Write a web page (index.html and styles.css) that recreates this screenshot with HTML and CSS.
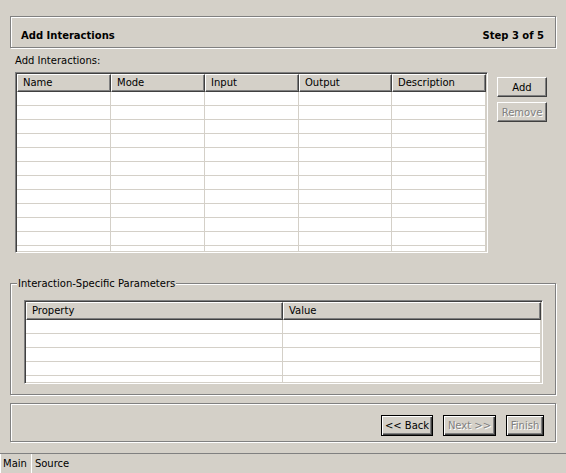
FILE: index.html
```html
<!DOCTYPE html>
<html>
<head>
<meta charset="utf-8">
<link rel="stylesheet" href="styles.css">
</head>
<body>
<div class="wizard">
  <div class="header etched">
    <span class="title">Add Interactions</span>
    <span class="step">Step 3 of 5</span>
  </div>
  <div class="label">Add Interactions:</div>
  <div class="main-row">
    <div class="table t1">
      <div class="thead">
        <div class="th">Name</div>
        <div class="th">Mode</div>
        <div class="th">Input</div>
        <div class="th">Output</div>
        <div class="th">Description</div>
      </div>
      <div class="tbody">
        <div class="tr"><div class="td"></div><div class="td"></div><div class="td"></div><div class="td"></div><div class="td"></div></div>
        <div class="tr"><div class="td"></div><div class="td"></div><div class="td"></div><div class="td"></div><div class="td"></div></div>
        <div class="tr"><div class="td"></div><div class="td"></div><div class="td"></div><div class="td"></div><div class="td"></div></div>
        <div class="tr"><div class="td"></div><div class="td"></div><div class="td"></div><div class="td"></div><div class="td"></div></div>
        <div class="tr"><div class="td"></div><div class="td"></div><div class="td"></div><div class="td"></div><div class="td"></div></div>
        <div class="tr"><div class="td"></div><div class="td"></div><div class="td"></div><div class="td"></div><div class="td"></div></div>
        <div class="tr"><div class="td"></div><div class="td"></div><div class="td"></div><div class="td"></div><div class="td"></div></div>
        <div class="tr"><div class="td"></div><div class="td"></div><div class="td"></div><div class="td"></div><div class="td"></div></div>
        <div class="tr"><div class="td"></div><div class="td"></div><div class="td"></div><div class="td"></div><div class="td"></div></div>
        <div class="tr"><div class="td"></div><div class="td"></div><div class="td"></div><div class="td"></div><div class="td"></div></div>
        <div class="tr"><div class="td"></div><div class="td"></div><div class="td"></div><div class="td"></div><div class="td"></div></div>
        <div class="tr last"><div class="td"></div><div class="td"></div><div class="td"></div><div class="td"></div><div class="td"></div></div>
      </div>
    </div>
    <div class="side-buttons">
      <button class="btn">Add</button>
      <button class="btn" disabled>Remove</button>
    </div>
  </div>
  <div class="group etched">
    <span class="group-title">Interaction-Specific Parameters</span>
    <div class="table t2">
      <div class="thead">
        <div class="th">Property</div>
        <div class="th">Value</div>
      </div>
      <div class="tbody">
        <div class="tr"><div class="td"></div><div class="td"></div></div>
        <div class="tr"><div class="td"></div><div class="td"></div></div>
        <div class="tr"><div class="td"></div><div class="td"></div></div>
        <div class="tr"><div class="td"></div><div class="td"></div></div>
        <div class="tr last"><div class="td"></div><div class="td"></div></div>
      </div>
    </div>
  </div>
  <div class="footer etched">
    <button class="btn nav back">&lt;&lt; Back</button>
    <button class="btn nav next" disabled>Next &gt;&gt;</button>
    <button class="btn nav finish" disabled>Finish</button>
  </div>
</div>
<div class="tabs">
  <div class="tab active">Main</div>
  <div class="tab">Source</div>
</div>
</body>
</html>
```

FILE: styles.css
```css
html, body {
  margin: 0;
  padding: 0;
  background: #d4d0c8;
  width: 566px;
  height: 473px;
  overflow: hidden;
  font-family: "DejaVu Sans", "Liberation Sans", sans-serif;
  font-size: 10px;
  color: #000;
}

.wizard {
  padding: 16px 10px 0 10px;
}

.etched {
  border: 1px solid #808080;
  box-shadow: 1px 1px 0 #fff, inset 1px 1px 0 #fff;
  box-sizing: border-box;
}

.header {
  height: 32px;
  display: flex;
  justify-content: space-between;
  padding: 12px 11px 0 10px;
  line-height: 14px;
  font-weight: bold;
}

.label {
  margin: 6px 0 4px 5px;
  line-height: 14px;
  height: 14px;
}

.main-row {
  display: flex;
  margin-left: 5px;
}

.table {
  box-sizing: border-box;
  background: #fff;
  border: 1px solid;
  border-color: #808080 #fff #fff #808080;
  box-shadow: inset 1px 1px 0 #404040, inset -1px -1px 0 #d4d0c8;
  padding: 1px;
  overflow: hidden;
}

.t1 {
  width: 473px;
  height: 181px;
}

.thead {
  display: flex;
  height: 18px;
}

.th {
  box-sizing: border-box;
  background: #d4d0c8;
  border-top: 1px solid #fff;
  border-left: 1px solid #fff;
  border-right: 1px solid #404040;
  border-bottom: 1px solid #404040;
  box-shadow: inset -1px -1px 0 #808080;
  padding-left: 5px;
  line-height: 16px;
  height: 18px;
  white-space: nowrap;
}

.tr {
  display: flex;
  height: 14px;
  box-sizing: border-box;
  border-bottom: 1px solid #d4d0c8;
}

.td {
  box-sizing: border-box;
  border-right: 1px solid #d4d0c8;
  height: 100%;
}

.t1 .th:nth-child(1), .t1 .td:nth-child(1) { width: 94px; }
.t1 .th:nth-child(2), .t1 .td:nth-child(2) { width: 94px; }
.t1 .th:nth-child(3), .t1 .td:nth-child(3) { width: 94px; }
.t1 .th:nth-child(4), .t1 .td:nth-child(4) { width: 93px; }
.t1 .th:nth-child(5), .t1 .td:nth-child(5) { width: 94px; }

.side-buttons {
  display: flex;
  flex-direction: column;
  gap: 5px;
  margin-left: 9px;
  padding-top: 5px;
}

.btn {
  box-sizing: border-box;
  width: 50px;
  height: 20px;
  padding: 0;
  margin: 0;
  font-family: inherit;
  font-size: 10px;
  color: #000;
  background: #d4d0c8;
  border: 1px solid;
  border-color: #fff #404040 #404040 #fff;
  box-shadow: inset -1px -1px 0 #808080;
}

.btn:disabled {
  color: #808080;
  text-shadow: 1px 1px 0 #fff;
}

.group {
  position: relative;
  margin-top: 30px;
  padding: 16px 12px 10px 13px;
}

.group-title {
  position: absolute;
  top: -7px;
  left: 6px;
  padding: 0 1px;
  background: #d4d0c8;
  line-height: 14px;
}

.t2 {
  height: 84px;
}

.t2 .th:nth-child(1), .t2 .td:nth-child(1) { width: 257px; }
.t2 .th:nth-child(2), .t2 .td:nth-child(2) { flex: 1; }

.footer {
  margin-top: 8px;
  height: 39px;
  display: flex;
  justify-content: flex-end;
  align-items: flex-start;
  gap: 10px;
  padding: 11px 11px 0 0;
}

.nav {
  height: 21px;
  border: 1px solid #000;
  box-shadow: inset 1px 1px 0 #fff, inset -1px -1px 0 #404040, inset -2px -2px 0 #808080;
}

.back { width: 52px; }
.next { width: 53px; }
.finish { width: 38px; }

.tabs {
  margin-top: 11px;
  border-top: 1px solid #808080;
  display: flex;
  height: 20px;
}

.tab {
  line-height: 20px;
  padding: 0 3px;
  box-sizing: border-box;
}

.tab.active {
  border-left: 1px solid #fff;
  border-right: 1px solid #fff;
  padding: 0 4px 0 2px;
}
```
